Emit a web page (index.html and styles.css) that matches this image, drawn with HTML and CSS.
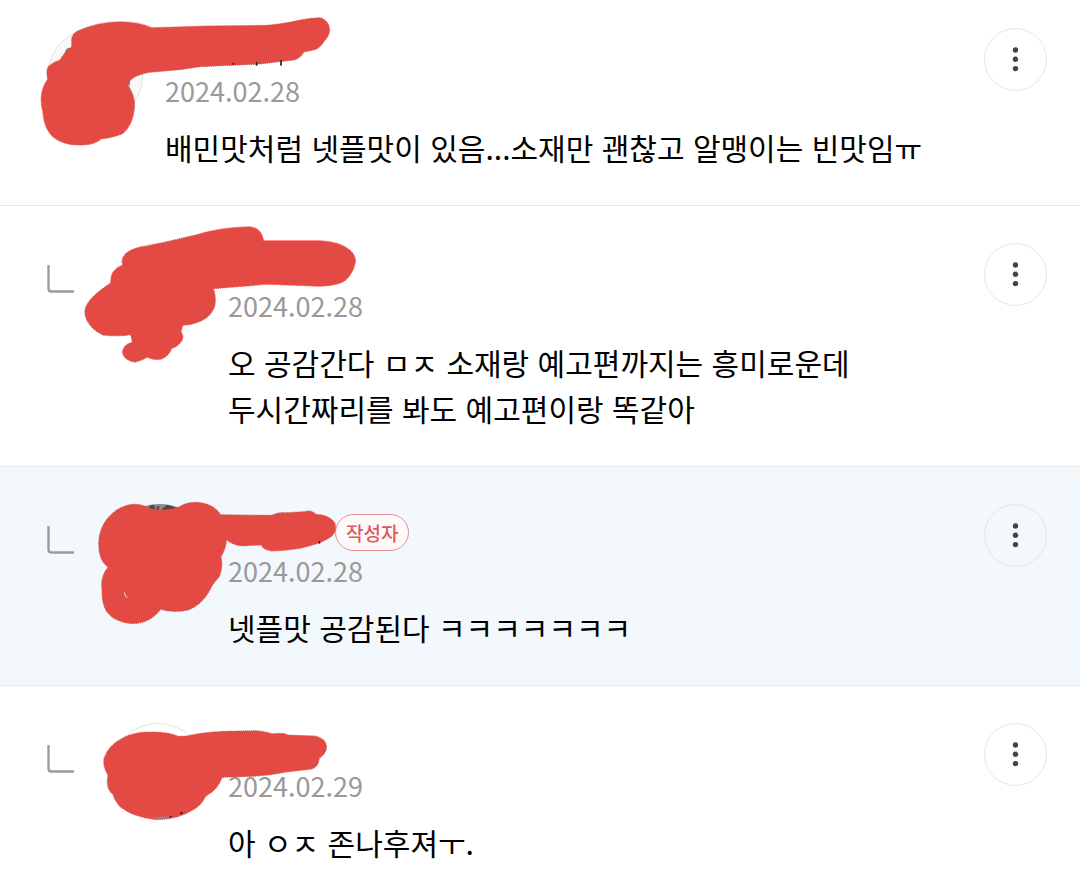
FILE: index.html
```html
<!DOCTYPE html>
<html lang="ko">
<head>
  <meta charset="UTF-8">
  <meta name="viewport" content="width=device-width, initial-scale=1.0">
  <title>댓글</title>
  <link rel="stylesheet" href="styles.css">
</head>
<body>
  <ul class="comment-list">
    <li class="comment">
      <div class="avatar"></div>
      <div class="comment-body">
        <div class="name"></div>
        <time class="date" datetime="2024-02-28">2024.02.28</time>
        <p class="text">배민맛처럼 넷플맛이 있음...소재만 괜찮고 알맹이는 빈맛임ㅠ</p>
      </div>
      <button class="more" type="button" aria-label="더보기">
        <svg viewBox="0 0 61 61"><circle cx="30.5" cy="21" r="2.7"/><circle cx="30.5" cy="30.3" r="2.7"/><circle cx="30.5" cy="39.6" r="2.7"/></svg>
      </button>
      <svg class="scribble" viewBox="0 0 1080 600" aria-hidden="true">
        <path class="hair" d="M133 166Q134 144 150 143L156 150Q143 152 140 168Z"/>
        <path class="ink" d="M155 140L155 115Q160 96 180 90Q235 66 300 65Q360 66 395 83L560 78L740 76Q800 70 840 60Q890 51 905 54Q930 66 929 93Q926 110 916 119Q898 148 880 150L852 156Q840 176 822 180L720 192L540 200L480 209L390 217Q345 225 330 242Q326 252 325 258Q345 285 344 322Q338 378 308 401Q280 412 243 417Q225 434 190 435Q130 438 98 410Q72 385 69 340Q60 305 65 280Q70 255 83 238Q77 210 86 198Q102 185 120 180Q130 160 155 140Z"/>
        <path class="name-edge" d="M640 188V194M710 186V197M783 180V197"/>
        <path class="hair" d="M324 246L330 242L328 262Z"/>
      </svg>
    </li>

    <li class="comment reply">
      <svg class="reply-arrow" viewBox="0 0 28 28" aria-hidden="true"><path d="M1.5 1V23.5Q1.5 26.5 4.5 26.5H26"/></svg>
      <div class="avatar"></div>
      <div class="comment-body">
        <div class="name"></div>
        <time class="date" datetime="2024-02-28">2024.02.28</time>
        <p class="text">오 공감간다 ㅁㅈ 소재랑 예고편까지는 흥미로운데<br>두시간짜리를 봐도 예고편이랑 똑같아</p>
      </div>
      <button class="more" type="button" aria-label="더보기">
        <svg viewBox="0 0 61 61"><circle cx="30.5" cy="21" r="2.7"/><circle cx="30.5" cy="30.3" r="2.7"/><circle cx="30.5" cy="39.6" r="2.7"/></svg>
      </button>
      <svg class="scribble" viewBox="0 -12 1080 600" aria-hidden="true">
        <path class="ink" d="M308 165Q302 145 318 130Q340 112 380 108L440 95L530 74Q600 52 690 50Q725 54 731 92L900 92Q960 95 990 120Q1010 140 1006 158Q1000 190 975 212Q955 226 900 229L740 223L580 236Q590 260 584 290Q572 320 545 332Q520 344 488 346L483 366Q492 375 487 390Q475 410 456 415Q445 440 425 447Q400 452 382 442Q365 452 345 457Q310 450 307 425Q312 402 337 397L332 374Q300 380 250 376Q215 360 200 330Q190 310 198 288Q215 255 272 219Q272 195 280 185Q290 172 308 165Z"/>
      </svg>
    </li>

    <li class="comment reply mine">
      <svg class="reply-arrow" viewBox="0 0 28 28" aria-hidden="true"><path d="M1.5 1V23.5Q1.5 26.5 4.5 26.5H26"/></svg>
      <div class="avatar"></div>
      <div class="comment-body">
        <div class="name"><span class="badge">작성자</span></div>
        <time class="date" datetime="2024-02-28">2024.02.28</time>
        <p class="text">넷플맛 공감된다 ㅋㅋㅋㅋㅋㅋㅋ</p>
      </div>
      <button class="more" type="button" aria-label="더보기">
        <svg viewBox="0 0 61 61"><circle cx="30.5" cy="21" r="2.7"/><circle cx="30.5" cy="30.3" r="2.7"/><circle cx="30.5" cy="39.6" r="2.7"/></svg>
      </button>
      <svg class="scribble" viewBox="0 21 1080 600" aria-hidden="true">
        <path class="photo" d="M370 140Q420 122 485 145L470 160H390Z"/>
        <path class="photo-dark" d="M385 138L402 134L406 148L392 146ZM425 148L440 134L466 142L462 156L438 154ZM410 139L418 139L417 149L410 149Z"/>
        <path class="ink" d="M264 322Q234 300 236 245Q240 185 290 150Q325 128 360 134Q385 140 395 148Q430 155 475 142Q500 126 530 127Q580 130 602 164L755 166Q775 155 800 158L850 155Q875 148 888 163Q930 165 945 190Q951 215 935 229Q910 248 865 259Q820 272 755 273Q730 270 723 255L665 258Q635 254 620 239Q618 265 603 290Q610 320 598 350Q575 375 570 390Q545 435 505 450Q460 460 422 448Q390 490 340 491Q285 488 260 455Q245 430 246 390Q240 350 264 322Z"/>
        <path class="gap" d="M311 393Q314 395 318 407L325 414L317 410Q312 402 311 393Z"/>
        <path class="name-edge" d="M898 243V251"/>
      </svg>
    </li>

    <li class="comment reply">
      <svg class="reply-arrow" viewBox="0 0 28 28" aria-hidden="true"><path d="M1.5 1V23.5Q1.5 26.5 4.5 26.5H26"/></svg>
      <div class="avatar"></div>
      <div class="comment-body">
        <div class="name"></div>
        <time class="date" datetime="2024-02-29">2024.02.29</time>
        <p class="text">아 ㅇㅈ 존나후져ㅜ.</p>
      </div>
      <button class="more" type="button" aria-label="더보기">
        <svg viewBox="0 0 61 61"><circle cx="30.5" cy="21" r="2.7"/><circle cx="30.5" cy="30.3" r="2.7"/><circle cx="30.5" cy="39.6" r="2.7"/></svg>
      </button>
      <svg class="scribble" viewBox="0 18 1080 600" aria-hidden="true">
        <path class="ink" d="M264 285Q248 260 252 235Q265 195 310 173Q340 156 390 156Q445 155 475 169L500 168Q540 158 610 154L710 152Q740 155 755 161L790 160L805 165L885 168Q915 174 920 198Q920 220 898 235Q895 265 870 268L800 276Q740 289 670 290L607 292Q595 320 580 333L556 350Q545 375 520 389Q475 418 410 419Q340 412 300 380Q280 355 280 345Q255 325 264 285Z"/>
        <path class="shade" d="M390 413Q420 408 450 410L448 416Q415 419 390 413Z"/>
        <path class="name-edge" d="M452 408V413M480 400L488 398"/>
      </svg>
    </li>
  </ul>
</body>
</html>
```

FILE: styles.css
```css
body {
  margin: 0;
  background-color: #fff;
  color: #000;
  font-family: "Noto Sans CJK KR", sans-serif;
}
.comment-list {
  margin: 0;
  padding: 0;
  list-style: none;
}
.comment {
  position: relative;
  display: flex;
  align-items: flex-start;
  padding: 37px 33px 35px 47px;
  border-bottom: 1px solid #e6e7e9;
}
.comment:first-child {
  padding-top: 28px;
}
.comment:last-child {
  padding-bottom: 20px;
  border-bottom: none;
}
.mine {
  background-color: #f3f8fc;
}
.reply-arrow {
  flex: none;
  width: 28px;
  height: 28px;
  margin: 22px 35px 0 0;
  fill: none;
  stroke: #9c9c9c;
  stroke-width: 2.4;
  stroke-linecap: round;
}
.avatar {
  flex: none;
  box-sizing: border-box;
  width: 96px;
  height: 96px;
  margin-right: 22px;
  border: 1px solid #e2e4e4;
  border-radius: 50%;
  background-color: #f8f8f8;
}
.reply .avatar {
  background-color: #fff;
}
.comment-body {
  flex: 1;
  min-width: 0;
}
.name {
  display: flex;
  align-items: flex-end;
  height: 43px;
}
.mine .name {
  height: 47px;
}
.badge {
  box-sizing: border-box;
  height: 37px;
  margin-left: 107px;
  padding: 0 10px;
  border: 1px solid #e58f90;
  border-radius: 19px;
  background-color: #fff8f9;
  color: #d9595c;
  font-size: 19px;
  font-weight: 500;
  line-height: 35px;
}
.date {
  display: block;
  color: #999;
  font-size: 27px;
  line-height: 40px;
}
.text {
  margin: 13px 0 0;
  font-size: 30px;
  line-height: 46px;
}
.more {
  flex: none;
  width: 63px;
  height: 63px;
  padding: 0;
  border: 1px solid #e6e6e6;
  border-radius: 50%;
  background-color: transparent;
  cursor: pointer;
}
.more svg {
  display: block;
  fill: #444;
}

/* 닉네임 가림 */
.scribble {
  position: absolute;
  top: 0;
  left: 20px;
  width: 360px;
  height: 200px;
  pointer-events: none;
}
.ink {
  fill: #e24a43;
  stroke: #e24a43;
  stroke-width: 3;
  stroke-dasharray: 3 3;
}
.hair {
  fill: #777;
}
.photo {
  fill: #8d8b88;
}
.photo-dark {
  fill: #4b4b4b;
}
.shade {
  fill: #a87788;
}
.gap {
  fill: #f8dedd;
}
.name-edge {
  fill: none;
  stroke: #33202a;
  stroke-width: 5;
}
```
